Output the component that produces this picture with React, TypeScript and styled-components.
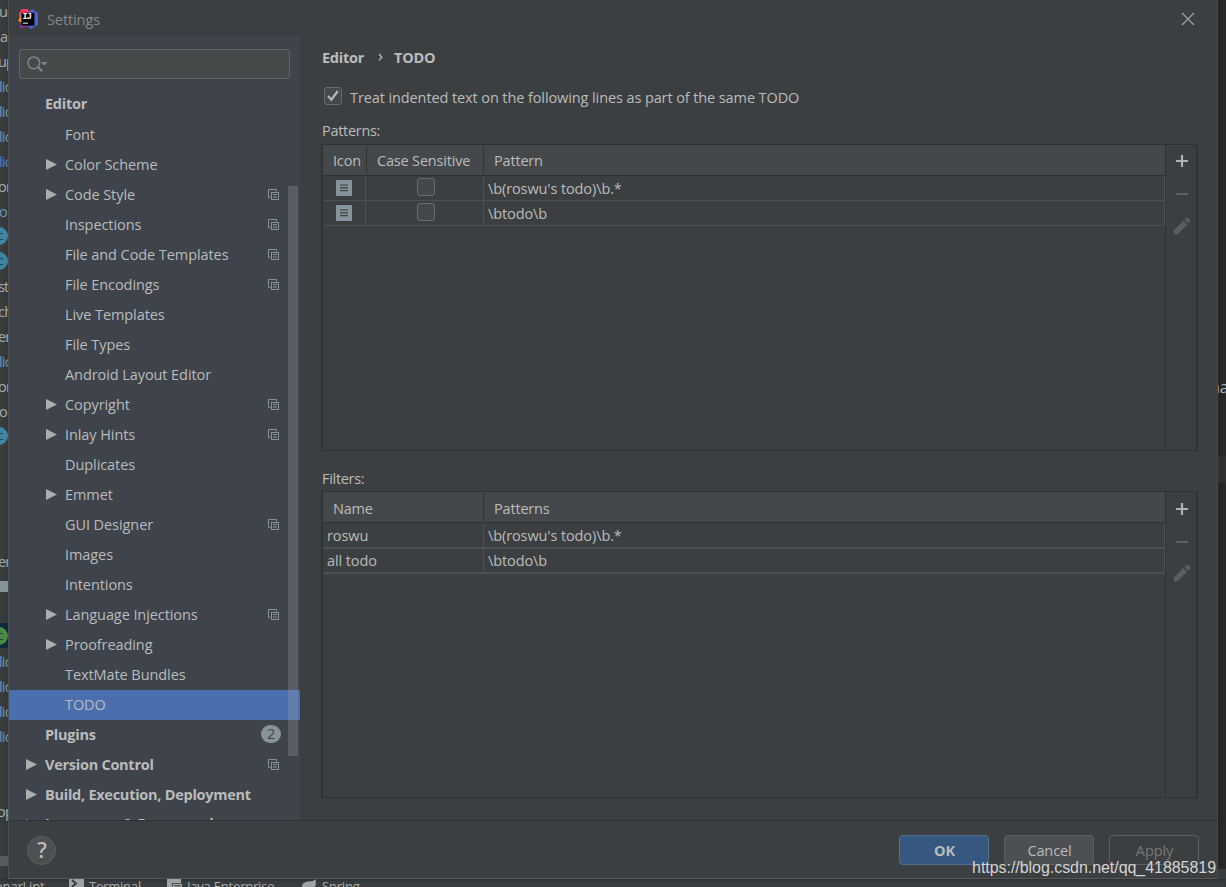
import React from "react";
import styled, { createGlobalStyle, css } from "styled-components";

const font = `"Open Sans", "Noto Sans", sans-serif`;

const Global = createGlobalStyle`
  *, *::before, *::after { box-sizing: border-box; }
  html, body { margin: 0; padding: 0; overflow: hidden; background: #2b2b2b; }
  body { font-family: ${font}; font-size: 14.5px; letter-spacing: -0.1px; color: #bbbbbb; }
  svg { display: block; flex: none; }
`;

const Screen = styled.div`
  position: relative;
  width: 1226px;
  height: 887px;
  display: flex;
  flex-direction: column;
  overflow: hidden;
  background: #3a3d3f;
`;

const Upper = styled.div`
  display: flex;
  height: 879px;
  flex: none;
`;

const ProjectStrip = styled.div`
  width: 8px;
  height: 879px;
  overflow: hidden;
  background: linear-gradient(90deg, #3a3d3f, #343638);
`;

const ProjectRows = styled.div`
  margin-top: -2px;
  height: 858px;
`;

const ProjectRow = styled.div<{ $color?: string; $selected?: boolean; $shift?: number }>`
  height: 25px;
  display: flex;
  align-items: center;
  white-space: nowrap;
  padding-top: 1px;
  letter-spacing: -0.8px;
  color: ${(p) => p.$color ?? "#aaaaaa"};
  background: ${(p) => (p.$selected ? "#0d293e" : "transparent")};
  text-indent: ${(p) => (p.$shift ?? 0) - 1}px;
`;

const ClassBadge = styled.span<{ $green?: boolean }>`
  flex: none;
  width: 18px;
  height: 18px;
  margin-left: -10px;
  margin-top: -1px;
  border-radius: 50%;
  background: ${(p) => (p.$green ? "#4a8a42" : "#3e86a0")};
  color: #26424e;
  font-size: 13px;
  line-height: 16px;
  text-align: center;
  text-indent: 0;
  padding-left: 2px;
`;

const FolderMark = styled.span`
  width: 8px;
  height: 11px;
  background: #87939a;
`;

const StripScroll = styled.div`
  height: 10px;
  background: #595b5d;
`;

const EditorStrip = styled.div`
  width: 8px;
  background: linear-gradient(90deg, #242424, #2a2a2a);
  display: flex;
  flex-direction: column;
  overflow: hidden;
`;

const EditorGap = styled.div<{ $h: number; $bg?: string }>`
  height: ${(p) => p.$h}px;
  flex: none;
  background: ${(p) => p.$bg ?? "transparent"};
`;

const EditorText = styled.div`
  height: 24px;
  line-height: 22px;
  font-size: 16px;
  color: #a9b7c6;
  text-indent: -8px;
  white-space: nowrap;
`;

const Dialog = styled.div`
  width: 1210px;
  height: 879px;
  display: flex;
  flex-direction: column;
  background: #3c3f41;
  border-left: 1px solid #4e5152;
  border-right: 1px solid #46494b;
  border-bottom: 1px solid #555758;
`;

const TitleBar = styled.div`
  height: 36px;
  flex: none;
  display: flex;
  align-items: center;
  padding: 2px 22px 0 9px;
`;

const Title = styled.div`
  flex: 1;
  margin-left: 9px;
  padding-top: 1px;
  color: #858687;
`;

const Body = styled.div`
  height: 784px;
  flex: none;
  display: flex;
`;

const Sidebar = styled.div`
  position: relative;
  width: 291px;
  height: 784px;
  flex: none;
  overflow: hidden;
  background: #3e434c;
  padding-top: 13px;
`;

const SearchBox = styled.div`
  width: 271px;
  height: 30px;
  margin: 0 0 11px 10px;
  border: 1px solid #646464;
  border-radius: 3px;
  background: #45494a;
  display: flex;
  align-items: center;
  padding-left: 6px;
`;

const TreeRow = styled.div<{ $level: number; $selected?: boolean }>`
  height: 30px;
  display: flex;
  align-items: center;
  padding-left: ${(p) => 16 + p.$level * 20}px;
  padding-right: 20px;
  background: ${(p) => (p.$selected ? "#4b6eaf" : "transparent")};
`;

const Twisty = styled.span`
  width: 20px;
  flex: none;
  padding: 0 0 1px 1px;
`;

const TreeLabel = styled.span<{ $bold?: boolean; $lift?: number }>`
  flex: 1;
  white-space: nowrap;
  padding-bottom: ${(p) => p.$lift ?? 2}px;
  font-weight: ${(p) => (p.$bold ? 700 : 400)};
  letter-spacing: ${(p) => (p.$bold ? -0.26 : -0.08)}px;
`;

const CountBadge = styled.span`
  width: 20px;
  height: 18px;
  margin-right: -1px;
  margin-top: -2px;
  border-radius: 9px;
  background: #87939a;
  color: #3e434c;
  text-align: center;
  line-height: 18px;
`;

const ScrollThumb = styled.div`
  position: absolute;
  right: 2px;
  top: 150px;
  width: 10px;
  height: 570px;
  background: rgba(166, 166, 166, 0.27);
`;

const Content = styled.div`
  flex: 1;
  padding: 8px 20px 0 21px;
`;

const Crumbs = styled.div`
  height: 26px;
  padding-left: 1px;
  display: flex;
  align-items: center;
  font-weight: 700;
  letter-spacing: -0.25px;
`;

const CrumbArrow = styled.span`
  width: 30px;
  display: flex;
  justify-content: center;
  padding-left: 3px;
`;

const Option = styled.div`
  height: 30px;
  margin-top: 11px;
  display: flex;
  align-items: center;
  padding-left: 3px;
`;

const Check = styled.span`
  width: 18px;
  height: 18px;
  flex: none;
  border: 1px solid #6b6b6b;
  border-radius: 3px;
  background: #43494a;
  display: flex;
  align-items: center;
  justify-content: center;
`;

const OptionText = styled.span`
  margin-left: 8px;
  padding-top: 2px;
`;

const GroupLabel = styled.div<{ $top: number }>`
  height: 20px;
  line-height: 20px;
  margin-top: ${(p) => p.$top}px;
  padding-left: 1px;
  letter-spacing: -0.3px;
`;

const Panel = styled.div<{ $top: number }>`
  height: 307px;
  width: 877px;
  margin-top: ${(p) => p.$top}px;
  display: flex;
  border: solid #323232;
  border-width: 1px 2px 1px 2px;
`;

const Table = styled.div`
  width: 842px;
  display: flex;
  flex-direction: column;
`;

const HeaderRow = styled.div`
  height: 31px;
  display: flex;
  background: #45484a;
  border-bottom: 1px solid #323232;
  padding: 1px 0;
`;

const HeaderCell = styled.div<{ $w?: number; $drop?: number }>`
  width: ${(p) => (p.$w ? `${p.$w}px` : "auto")};
  flex: ${(p) => (p.$w ? "none" : 1)};
  padding: ${(p) => p.$drop ?? 1}px 0 0 10px;
  display: flex;
  align-items: center;
  white-space: nowrap;
  letter-spacing: -0.18px;
  border-right: ${(p) => (p.$w ? "1px solid #323232" : "none")};
`;

const Row = styled.div<{ $thick?: boolean }>`
  height: 25px;
  display: flex;
  border-bottom: ${(p) => (p.$thick ? 2 : 1)}px solid #4d5052;
  border-right: 1px solid #505355;
`;

const FilterRows = styled.div`
  padding-top: 1px;
`;

const Cell = styled.div<{ $w?: number; $center?: boolean; $raise?: boolean }>`
  width: ${(p) => (p.$w ? `${p.$w}px` : "auto")};
  flex: ${(p) => (p.$w ? "none" : 1)};
  padding: ${(p) => (p.$center ? (p.$raise ? "0 0 2px 2px" : "0 0 1px 0") : p.$raise ? "0 0 1px 4px" : "1px 0 0 4px")};
  display: flex;
  align-items: center;
  justify-content: ${(p) => (p.$center ? "center" : "flex-start")};
  white-space: nowrap;
  border-right: ${(p) => (p.$w ? "1px solid #505355" : "none")};
`;

const Tools = styled.div`
  flex: 1;
  border-left: 1px solid #323232;
  display: flex;
  flex-direction: column;
  align-items: center;
  padding-left: 1px;
`;

const ToolSlot = styled.div<{ $h: number }>`
  height: ${(p) => p.$h}px;
  display: flex;
  align-items: center;
`;

const Footer = styled.div`
  flex: 1;
  border-top: 1px solid #323232;
  display: flex;
  align-items: center;
  gap: 15px;
  padding: 1px 18px 0 18px;
`;

const Help = styled.div`
  width: 29px;
  height: 29px;
  border-radius: 50%;
  border: 1px solid #5e6060;
  background: #4c5052;
  display: flex;
  align-items: center;
  justify-content: center;
  font-size: 21px;
  font-weight: 600;
  line-height: 24px;
  padding-bottom: 1px;
  padding-left: 1px;
  margin-right: auto;
`;

const Button = styled.div<{ $kind: "primary" | "normal" | "disabled" }>`
  width: 90px;
  height: 30px;
  border-radius: 4px;
  border: 1px solid #5e6060;
  display: flex;
  align-items: center;
  justify-content: center;
  padding-left: 1px;
  ${(p) =>
    p.$kind === "primary"
      ? css`background: #365880; border-color: #4c708c; font-weight: 700;`
      : p.$kind === "normal"
      ? css`background: #4c5052;`
      : css`color: #777777;`}
`;

const StatusBar = styled.div`
  height: 8px;
  display: flex;
  overflow: hidden;
  background: #393c3e;
  box-shadow: inset 0 2px 2px rgba(0, 0, 0, 0.15);
`;

const StatusItem = styled.div<{ $w: number; $shift?: number }>`
  width: ${(p) => p.$w}px;
  height: 24px;
  flex: none;
  display: flex;
  margin-left: ${(p) => p.$shift ?? 0}px;
  gap: 5px;
  white-space: nowrap;
  font-size: 13px;
  line-height: 14px;
  letter-spacing: -0.2px;
  color: #a9abac;
`;

const Watermark = styled.div`
  position: absolute;
  right: 10px;
  bottom: 9px;
  font-family: "Liberation Sans", sans-serif;
  font-size: 16px;
  line-height: 20px;
  letter-spacing: -0.05px;
  color: #d4d4d4;
`;

const Logo = () => (
  <svg width="20" height="20" viewBox="0 0 20 20">
    <defs>
      <linearGradient id="blue" x1="0" y1="0" x2="1" y2="1">
        <stop offset="0" stopColor="#2a7be8" />
        <stop offset="0.6" stopColor="#5a5bd8" />
        <stop offset="1" stopColor="#2f7df0" />
      </linearGradient>
      <linearGradient id="pink" x1="1" y1="0" x2="0" y2="1">
        <stop offset="0" stopColor="#f8315f" />
        <stop offset="1" stopColor="#f0455a" />
      </linearGradient>
    </defs>
    <path d="M14 0 L19.8 4 V15.5 L13 20 L8 16 L10 4Z" fill="url(#blue)" />
    <path d="M3.5 0 H9.5 L13 4.5 L8 11 L1 9 L1 4.5Z" fill="url(#pink)" />
    <path d="M0 11.5 L3 7 L5 15Z" fill="#f78a24" />
    <path d="M2 19 L3 13 L9 15 L11 17Z" fill="#a22cc0" />
    <rect x="3.5" y="3.7" width="13" height="13" fill="#050505" />
    <text x="4.6" y="10.4" fontFamily="Liberation Mono" fontWeight="700" fontSize="8.5" letterSpacing="-0.9" fill="#ffffff">IJ</text>
    <rect x="5" y="13.6" width="5" height="1.2" fill="#cfcfcf" />
  </svg>
);

const Arrow = () => (
  <svg width="11" height="11" viewBox="0 0 11 11">
    <path d="M0 0 L11 5.5 L0 11Z" fill="#adadad" />
  </svg>
);

const CopyIcon = () => (
  <svg width="12" height="12" viewBox="0 0 12 12" fill="none" stroke="#87939a">
    <path d="M2.5 8.5 H0.5 V0.5 H8.5 V2.5" />
    <rect x="3.5" y="3.5" width="7" height="7" />
    <path d="M5 5.5 H9 M5 8 H9" />
  </svg>
);

const PlusIcon = () => (
  <svg width="14" height="14" viewBox="0 0 14 14">
    <path d="M7 1 V13 M1 7 H13" stroke="#afb1b3" strokeWidth="2.2" />
  </svg>
);

const MinusIcon = () => (
  <svg width="14" height="4" viewBox="0 0 14 4">
    <rect x="1" y="1" width="12" height="2" fill="#5d6062" />
  </svg>
);

const PencilIcon = () => (
  <svg width="18" height="18" viewBox="0 0 18 18" fill="#5b5d5f">
    <path d="M0.8 17.2 V13.4 L10.3 4 L14 7.7 L4.6 17.2Z" />
    <path d="M11.4 2.9 L13.4 0.9 Q14.2 0.4 15 1 L17 3 Q17.6 3.8 17 4.6 L15.1 6.6Z" />
  </svg>
);

const NoteIcon = () => (
  <svg width="16" height="16" viewBox="0 0 16 16">
    <rect width="16" height="16" fill="#87939a" />
    <path d="M4 5 H12 M4 7.8 H12 M4 10.6 H12" stroke="#3c3f41" strokeWidth="1.2" />
  </svg>
);

const SearchIcon = () => (
  <svg width="22" height="18" viewBox="0 0 22 18">
    <circle cx="7.8" cy="7.8" r="5.9" fill="none" stroke="#7d868b" strokeWidth="1.5" />
    <path d="M12 12 L16 16.2" stroke="#7d868b" strokeWidth="2" />
    <path d="M15 7 H21.4 L18.2 10.6Z" fill="#7d868b" />
  </svg>
);

type Node = {
  label: string;
  level: number;
  arrow?: boolean;
  copy?: boolean;
  bold?: boolean;
  selected?: boolean;
  count?: number;
  lift?: number;
};

const tree: Node[] = [
  { label: "Editor", level: 0, bold: true, lift: 4 },
  { label: "Font", level: 1 },
  { label: "Color Scheme", level: 1, arrow: true },
  { label: "Code Style", level: 1, arrow: true, copy: true },
  { label: "Inspections", level: 1, copy: true },
  { label: "File and Code Templates", level: 1, copy: true },
  { label: "File Encodings", level: 1, copy: true },
  { label: "Live Templates", level: 1 },
  { label: "File Types", level: 1 },
  { label: "Android Layout Editor", level: 1 },
  { label: "Copyright", level: 1, arrow: true, copy: true },
  { label: "Inlay Hints", level: 1, arrow: true, copy: true },
  { label: "Duplicates", level: 1 },
  { label: "Emmet", level: 1, arrow: true },
  { label: "GUI Designer", level: 1, copy: true },
  { label: "Images", level: 1 },
  { label: "Intentions", level: 1 },
  { label: "Language Injections", level: 1, arrow: true, copy: true },
  { label: "Proofreading", level: 1, arrow: true },
  { label: "TextMate Bundles", level: 1 },
  { label: "TODO", level: 1, selected: true },
  { label: "Plugins", level: 0, bold: true, count: 2 },
  { label: "Version Control", level: 0, arrow: true, bold: true, copy: true },
  { label: "Build, Execution, Deployment", level: 0, arrow: true, bold: true },
  { label: "Languages & Frameworks", level: 0, arrow: true, bold: true, lift: 4 },
];

const blue = "#6897bb";
const project: Record<number, React.ReactNode> = {
  0: <ProjectRow>ue</ProjectRow>,
  1: <ProjectRow $shift={1}>a</ProjectRow>,
  2: <ProjectRow $shift={-1}>up</ProjectRow>,
  3: <ProjectRow $color={blue}>lic</ProjectRow>,
  4: <ProjectRow $color={blue}>lic</ProjectRow>,
  5: <ProjectRow $color={blue}>lic</ProjectRow>,
  6: <ProjectRow $color="#4a80cf">lic</ProjectRow>,
  7: <ProjectRow $shift={-1}>on</ProjectRow>,
  8: <ProjectRow $color={blue}>o</ProjectRow>,
  9: <ProjectRow><ClassBadge>c</ClassBadge></ProjectRow>,
  10: <ProjectRow><ClassBadge>c</ClassBadge></ProjectRow>,
  11: <ProjectRow $shift={-1}>st</ProjectRow>,
  12: <ProjectRow $shift={-1}>ch</ProjectRow>,
  13: <ProjectRow $shift={-1}>er</ProjectRow>,
  14: <ProjectRow $color={blue}>lic</ProjectRow>,
  15: <ProjectRow $shift={-1}>on</ProjectRow>,
  16: <ProjectRow>o</ProjectRow>,
  17: <ProjectRow><ClassBadge>c</ClassBadge></ProjectRow>,
  22: <ProjectRow $shift={-1}>er</ProjectRow>,
  23: <ProjectRow><FolderMark /></ProjectRow>,
  25: <ProjectRow $selected><ClassBadge $green>c</ClassBadge></ProjectRow>,
  26: <ProjectRow $color={blue}>lic</ProjectRow>,
  27: <ProjectRow $color={blue}>lic</ProjectRow>,
  28: <ProjectRow $color={blue}>lic</ProjectRow>,
  29: <ProjectRow $color={blue}>lic</ProjectRow>,
  32: <ProjectRow $shift={-2}>op</ProjectRow>,
};

const ToolColumn = ({ offset }: { offset: number }) => (
  <Tools>
    <ToolSlot $h={32 + offset * 2}><PlusIcon /></ToolSlot>
    <ToolSlot $h={33 - offset * 2}><MinusIcon /></ToolSlot>
    <ToolSlot $h={31}><PencilIcon /></ToolSlot>
  </Tools>
);

export default function App() {
  return (
    <>
      <Global />
      <Screen>
        <Upper>
          <ProjectStrip>
            <ProjectRows>
              {Array.from({ length: 34 }, (_, i) => (
                <React.Fragment key={i}>{project[i] ?? <ProjectRow />}</React.Fragment>
              ))}
            </ProjectRows>
            <StripScroll />
          </ProjectStrip>
          <Dialog>
            <TitleBar>
              <Logo />
              <Title>Settings</Title>
              <svg width="14" height="14" viewBox="0 0 14 14">
                <path d="M1 1 L13 13 M13 1 L1 13" stroke="#a5a6a7" strokeWidth="1.1" />
              </svg>
            </TitleBar>
            <Body>
              <Sidebar>
                <SearchBox><SearchIcon /></SearchBox>
                {tree.map((n) => (
                  <TreeRow key={n.label} $level={n.level} $selected={n.selected}>
                    <Twisty>{n.arrow && <Arrow />}</Twisty>
                    <TreeLabel $bold={n.bold} $lift={n.lift}>{n.label}</TreeLabel>
                    {n.copy && <CopyIcon />}
                    {n.count && <CountBadge>{n.count}</CountBadge>}
                  </TreeRow>
                ))}
                <ScrollThumb />
              </Sidebar>
              <Content>
                <Crumbs>
                  Editor
                  <CrumbArrow>
                    <svg width="5" height="9" viewBox="0 0 5 9">
                      <path d="M1 1 L3.8 4.2 L1 7.4" fill="none" stroke="#bbbbbb" strokeWidth="1.3" />
                    </svg>
                  </CrumbArrow>
                  TODO
                </Crumbs>
                <Option>
                  <Check>
                    <svg width="14" height="14" viewBox="0 0 14 14">
                      <path d="M2 7 L5.4 10.6 L11.8 2" fill="none" stroke="#b5b5b5" strokeWidth="2.3" />
                    </svg>
                  </Check>
                  <OptionText>Treat indented text on the following lines as part of the same TODO</OptionText>
                </Option>
                <GroupLabel $top={10}>Patterns:</GroupLabel>
                <Panel $top={3}>
                  <Table>
                    <HeaderRow>
                      <HeaderCell $w={44}>Icon</HeaderCell>
                      <HeaderCell $w={117}>Case Sensitive</HeaderCell>
                      <HeaderCell>Pattern</HeaderCell>
                    </HeaderRow>
                    {["\\b(roswu's todo)\\b.*", "\\btodo\\b"].map((t) => (
                      <Row key={t}>
                        <Cell $w={43} $center><NoteIcon /></Cell>
                        <Cell $w={118} $center $raise><Check /></Cell>
                        <Cell>{t}</Cell>
                      </Row>
                    ))}
                  </Table>
                  <ToolColumn offset={0} />
                </Panel>
                <GroupLabel $top={18}>Filters:</GroupLabel>
                <Panel $top={2}>
                  <Table>
                    <HeaderRow>
                      <HeaderCell $w={161} $drop={3}>Name</HeaderCell>
                      <HeaderCell $drop={3}>Patterns</HeaderCell>
                    </HeaderRow>
                    <FilterRows>
                      {[["roswu", "\\b(roswu's todo)\\b.*"], ["all todo", "\\btodo\\b"]].map(([a, b]) => (
                        <Row key={a} $thick>
                          <Cell $w={161} $raise>{a}</Cell>
                          <Cell $raise>{b}</Cell>
                        </Row>
                      ))}
                    </FilterRows>
                  </Table>
                  <ToolColumn offset={1} />
                </Panel>
              </Content>
            </Body>
            <Footer>
              <Help>?</Help>
              <Button $kind="primary">OK</Button>
              <Button $kind="normal">Cancel</Button>
              <Button $kind="disabled">Apply</Button>
            </Footer>
          </Dialog>
          <EditorStrip>
            <EditorGap $h={376} />
            <EditorText>na</EditorText>
            <EditorGap $h={56} />
            <EditorGap $h={27} $bg="#303030" />
            <EditorGap $h={386} />
            <EditorGap $h={10} $bg="#3a3d3f" />
          </EditorStrip>
        </Upper>
        <StatusBar>
          <StatusItem $w={74} $shift={-5}>onarLint</StatusItem>
          <StatusItem $w={98}>
            <svg width="15" height="14" viewBox="0 0 15 14">
              <rect width="15" height="14" fill="#a0a2a4" />
              <path d="M3 1 L7 4.5 L3 8" fill="none" stroke="#3c3f41" strokeWidth="2" />
            </svg>
            Terminal
          </StatusItem>
          <StatusItem $w={134}>
            <svg width="15" height="14" viewBox="0 0 15 14">
              <path d="M0 0 H14 V4 H5 V14 H0Z" fill="#a0a2a4" />
              <path d="M6.5 14 V5.5 H14.5 V14 M6.5 8 H14" fill="none" stroke="#a0a2a4" strokeWidth="1.4" />
            </svg>
            Java Enterprise
          </StatusItem>
          <StatusItem $w={90}>
            <svg width="16" height="14" viewBox="0 0 16 14">
              <path d="M1 8 Q1 2.5 8 2.5 Q13 2.5 14.5 0 Q16 9 11 12 L2 13Z" fill="#a0a2a4" />
            </svg>
            Spring
          </StatusItem>
        </StatusBar>
        <Watermark>https://blog.csdn.net/qq_41885819</Watermark>
      </Screen>
    </>
  );
}
